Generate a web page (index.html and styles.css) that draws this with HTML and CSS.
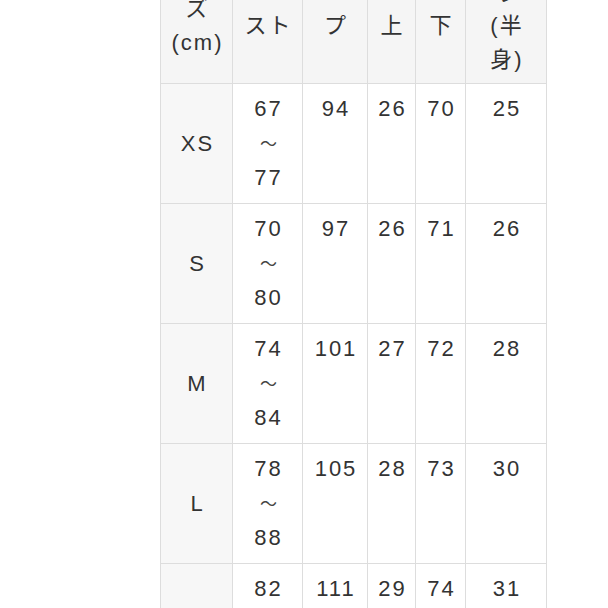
FILE: index.html
```html
<!DOCTYPE html>
<html lang="ja">
<head>
<meta charset="utf-8">
<title>サイズ表</title>
<link rel="stylesheet" href="styles.css">
</head>
<body>
<div class="page">
  <table class="size-table">
    <colgroup>
      <col class="c-size">
      <col class="c-waist">
      <col class="c-hip">
      <col class="c-rise">
      <col class="c-inseam">
      <col class="c-thigh">
    </colgroup>
    <thead>
      <tr>
        <th class="h-size">サイ<br>ズ<br>(cm)</th>
        <th class="h-short"><span class="first">ウエ</span>スト</th>
        <th class="h-short"><span class="first">ヒッ</span>プ</th>
        <th class="h-short"><span class="first">股</span>上</th>
        <th class="h-short"><span class="first">股</span>下</th>
        <th class="h-long">わた<br>り<br>(半<br>身)</th>
      </tr>
    </thead>
    <tbody>
      <tr>
        <th class="row-head">XS</th>
        <td>67<br><span class="tilde">〜</span><br>77</td>
        <td>94</td>
        <td>26</td>
        <td>70</td>
        <td>25</td>
      </tr>
      <tr>
        <th class="row-head">S</th>
        <td>70<br><span class="tilde">〜</span><br>80</td>
        <td>97</td>
        <td>26</td>
        <td>71</td>
        <td>26</td>
      </tr>
      <tr>
        <th class="row-head">M</th>
        <td>74<br><span class="tilde">〜</span><br>84</td>
        <td>101</td>
        <td>27</td>
        <td>72</td>
        <td>28</td>
      </tr>
      <tr>
        <th class="row-head">L</th>
        <td>78<br><span class="tilde">〜</span><br>88</td>
        <td>105</td>
        <td>28</td>
        <td>73</td>
        <td>30</td>
      </tr>
      <tr>
        <th class="row-head">XL</th>
        <td>82<br><span class="tilde">〜</span><br>92</td>
        <td>111</td>
        <td>29</td>
        <td>74</td>
        <td>31</td>
      </tr>
    </tbody>
  </table>
</div>
</body>
</html>
```

FILE: styles.css
```css
html, body {
  margin: 0;
  padding: 0;
  background: #ffffff;
}

.page {
  padding-left: 160px;
  overflow: hidden;
  height: 608px;
}

.size-table {
  margin-top: -66px;
  border-collapse: collapse;
  table-layout: fixed;
  width: 386px;
  font-family: "Liberation Sans", "Noto Sans CJK JP", sans-serif;
  font-size: 22px;
  line-height: 33.5px;
  letter-spacing: 2px;
  color: #333333;
}

.c-size { width: 72px; }
.c-waist { width: 70px; }
.c-hip { width: 65px; }
.c-rise { width: 48px; }
.c-inseam { width: 50px; }
.c-thigh { width: 81px; }

.size-table th,
.size-table td {
  border: 1px solid #dddddd;
  text-align: center;
  padding: 0 0 0 2px;
  white-space: nowrap;
  font-weight: normal;
}

.size-table thead th {
  background: #f5f5f5;
  vertical-align: middle;
  height: 148px;
}

.size-table thead th.h-short {
  vertical-align: bottom;
  padding-bottom: 41px;
  height: 107px;
}

.size-table thead th.h-short .first {
  display: block;
  margin-bottom: 14px;
}

.size-table tbody th.row-head {
  background: #f7f7f7;
  vertical-align: middle;
}

.size-table tbody td {
  background: #ffffff;
  vertical-align: top;
  padding-top: 8px;
}

.size-table tbody tr {
  height: 120px;
}

.tilde {
  font-size: 17px;
  letter-spacing: 0;
  color: #444444;
}
```
